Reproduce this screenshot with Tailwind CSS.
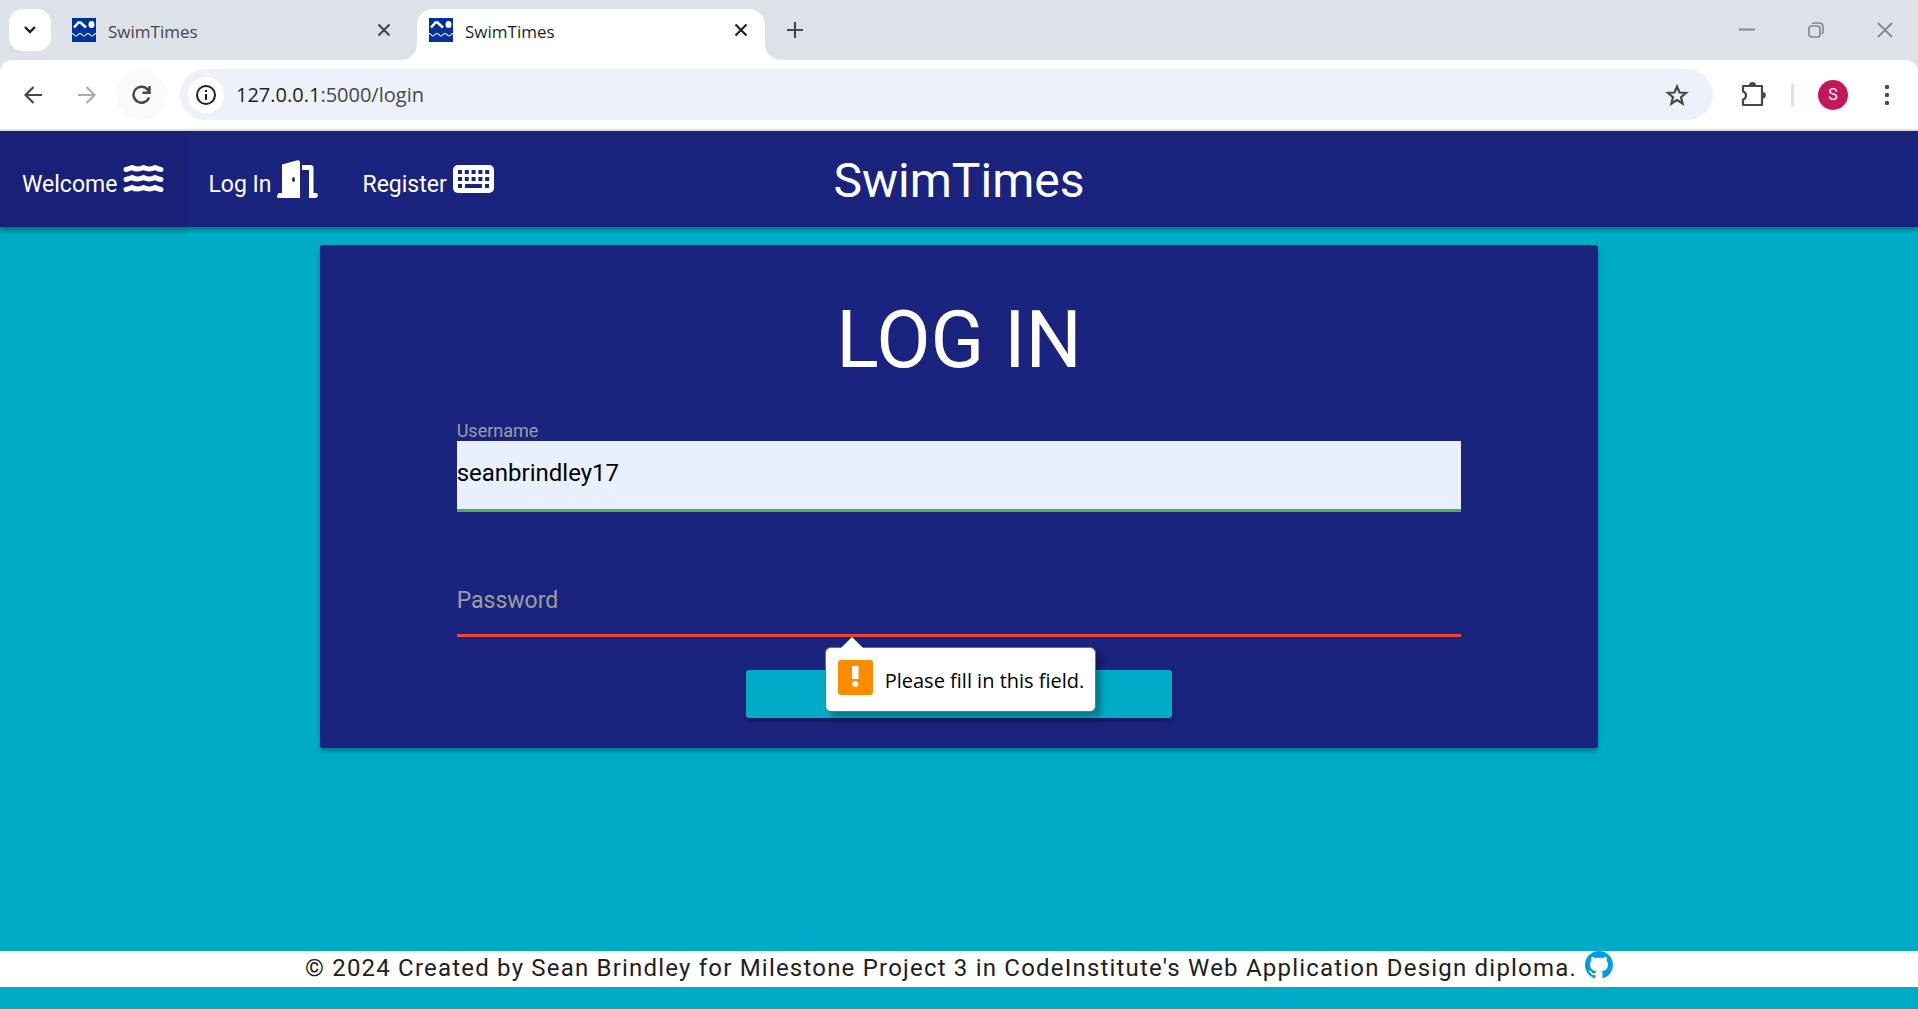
<!DOCTYPE html>
<html lang="en">
<head>
<meta charset="utf-8">
<title>SwimTimes</title>
<script src="https://cdn.jsdelivr.net/npm/@tailwindcss/browser@4"></script>
</head>
<body class="flex min-h-screen flex-col bg-[#00acc5] font-['Roboto',sans-serif] text-white">

<svg class="hidden">
  <symbol id="favicon" viewBox="0 0 24 24">
    <path fill="#039" d="M0 0h24v24H0z"/>
    <path fill="none" stroke="#fff" stroke-width="2.600" d="M2 9.500 6.500 4.500h2L14 9.500"/>
    <ellipse cx="19.500" cy="6.500" rx="3" ry="3.500" fill="#fff"/>
    <path fill="none" stroke="#fff" stroke-width="1.200" d="M0 15.500c2 0 2 2.500 4 2.500s2-2.500 4-2.500 2 2.500 4 2.500 2-2.500 4-2.500 2 2.500 4 2.500 2-2.500 4-2.500"/>
  </symbol>
  <symbol id="cross" viewBox="0 0 14 14">
    <path fill="none" stroke="currentColor" stroke-width="2.200" d="m1.500 1.500 11 11m0-11-11 11"/>
  </symbol>
</svg>

<!-- Browser window -->
<div class="bg-[#dde1e8] font-['Open_Sans',sans-serif] text-[#474747]">
  <div class="flex h-[60px] items-end pl-[9px]">
    <button aria-label="Search tabs" class="mb-[9px] flex size-[42px] items-center justify-center rounded-[14px] bg-white text-[#1f1f1f]">
      <svg class="h-2 w-3" viewBox="0 0 12 8" fill="none" stroke="currentColor" stroke-width="2.400"><path d="m1 1 5 5 5-5"/></svg>
    </button>
    <div class="ml-[21px] flex h-[51px] w-[345px] items-start pt-[9px]">
      <svg class="size-6"><use href="#favicon"/></svg>
      <span class="ml-3 flex-1 text-[17px] leading-7">SwimTimes</span>
      <button aria-label="Close tab" class="mt-[5px] mr-[26px] size-[14px]"><svg class="size-full"><use href="#cross"/></svg></button>
    </div>
    <div class="relative flex h-[51px] w-[348px] items-start rounded-t-2xl bg-white px-3 pt-[9px] text-[#1f1f1f]">
      <svg class="absolute bottom-0 -left-4 size-4" viewBox="0 0 16 16" fill="#fff"><path d="M16 0v16H0A16 16 0 0 0 16 0"/></svg>
      <svg class="absolute -right-4 bottom-0 size-4" viewBox="0 0 16 16" fill="#fff"><path d="M0 0v16h16A16 16 0 0 1 0 0"/></svg>
      <svg class="size-6"><use href="#favicon"/></svg>
      <span class="ml-3 flex-1 text-[17px] leading-7">SwimTimes</span>
      <button aria-label="Close tab" class="mt-[5px] mr-[5px] size-[14px]"><svg class="size-full"><use href="#cross"/></svg></button>
    </div>
    <button aria-label="New tab" class="mb-[22px] ml-[22px] size-4">
      <svg viewBox="0 0 16 16" stroke="currentColor" stroke-width="2.200"><path d="M8 0v16M0 8h16"/></svg>
    </button>
    <div class="mr-[25px] mb-[22px] ml-auto flex gap-[53px] text-[#85878b]">
      <button aria-label="Minimize" class="size-4"><svg viewBox="0 0 16 16" stroke="currentColor" stroke-width="2"><path d="M0 7.500h16"/></svg></button>
      <button aria-label="Restore" class="size-4"><svg viewBox="0 0 16 16" fill="none" stroke="currentColor" stroke-width="1.700"><rect x="1" y="4" width="11" height="11" rx="2.500"/><path d="M4 1.500C5 1 6 1 7 1h4q4 0 4 4v4q0 2-1 3"/></svg></button>
      <button aria-label="Close" class="size-4"><svg viewBox="0 0 16 16" stroke="currentColor" stroke-width="1.800"><path d="m1 1 14 14M15 1 1 15"/></svg></button>
    </div>
  </div>

  <div class="flex h-[71px] items-center rounded-t-xl border-b-2 border-[#e0e2e2] bg-white">
    <button aria-label="Back" class="ml-6 size-[18px]"><svg viewBox="0 0 18 18" fill="none" stroke="currentColor" stroke-width="2.200"><path d="M18 9H2M9.500 1 1.500 9l8 8"/></svg></button>
    <button aria-label="Forward" class="ml-9 size-[18px] text-[#ababab]"><svg viewBox="0 0 18 18" fill="none" stroke="currentColor" stroke-width="2.200"><path d="M0 9h16M8.500 1l8 8-8 8"/></svg></button>
    <button aria-label="Reload" class="ml-5 flex size-[51px] items-center justify-center rounded-full bg-[#fafafa]">
      <svg class="size-5" viewBox="0 0 20 20" fill="none" stroke="currentColor" stroke-width="2.400"><path d="M17 12.500a8 8 0 1 1-1-7.500l1 1.500M17.500 1v6.800h-7"/></svg>
    </button>
    <div class="ml-[13px] flex h-[51px] flex-1 items-center rounded-full bg-[#ecf1fa] pr-6 pl-2">
      <button aria-label="Site information" class="flex size-9 items-center justify-center rounded-full bg-white text-[#1f1f1f]">
        <svg class="size-5" viewBox="0 0 20 20" fill="none" stroke="currentColor" stroke-width="2"><circle cx="10" cy="10" r="9"/><path d="M10 9v6M10 5v2"/></svg>
      </button>
      <div class="ml-3 flex-1 text-[20px]"><span class="text-[#1f1f1f]">127.0.0.1</span>:5000/login</div>
      <button aria-label="Bookmark" class="size-6"><svg viewBox="0 0 24 24" fill="none" stroke="currentColor" stroke-width="2.200"><path d="m12 3.500 2.500 6 6.500.5-5 4.200 1.600 6.300L12 17l-5.600 3.500L8 14.200 3 10l6.500-.5z"/></svg></button>
    </div>
    <button aria-label="Extensions" class="ml-7 size-[26px]">
      <svg viewBox="0 0 26 26"><path fill="none" stroke="currentColor" stroke-width="2.200" stroke-linejoin="round" d="M2 4h19v19H2v-5.500c4-1 4-7 0-8z"/><path fill="currentColor" d="M8 3.500a3.500 3.500 0 0 1 7 0zM21.500 10a3.300 3.300 0 0 1 0 6.600z"/></svg>
    </button>
    <div class="ml-6 h-6 w-[3px] rounded bg-[#d3e3fd]"></div>
    <button aria-label="Profile" class="ml-6 size-[30px] rounded-full bg-[#c2185b] font-['Roboto',sans-serif] text-base text-white">S</button>
    <button aria-label="Menu" class="mr-[21px] ml-[29px] size-5"><svg viewBox="0 0 20 20" fill="currentColor"><circle cx="10" cy="2" r="2.200"/><circle cx="10" cy="10" r="2.200"/><circle cx="10" cy="18" r="2.200"/></svg></button>
  </div>
</div>

<!-- Site navigation -->
<nav class="relative grid h-24 grid-cols-[1fr_auto_1fr] bg-[#1a237e] shadow-[0_3px_4px_rgba(0,0,0,0.3)]">
  <ul class="flex text-[23px]">
    <li><a href="#" class="flex h-[103px] items-start bg-black/5 px-[22px] pt-[34px]"><span class="mt-1 leading-8">Welcome</span>
      <svg class="ml-[6px] h-7 w-[41px]" viewBox="0 0 41 28" fill="none" stroke="#fff" stroke-width="5" stroke-linecap="round"><path d="M3 4.500q4-1 6-2 5 3 11.500 0 6 3 11.500 0 3 1.500 6 2M3 14.500q4-1 6-2 5 3 11.500 0 6 3 11.500 0 3 1.500 6 2M3 24.500q4-1 6-2 5 3 11.500 0 6 3 11.500 0 3 1.500 6 2"/></svg></a></li>
    <li><a href="#" class="flex items-start px-[22px] pt-[29px]"><span class="mt-[9px] leading-8">Log In</span>
      <svg class="ml-[6px] h-[38px] w-[41px]" viewBox="0 0 41 38" fill="#fff"><path fill-rule="evenodd" d="M5 4.500 20.500.2Q23 0 23 2v36H1.500Q0 38 0 36.500T1.500 33H5zM16.500 17q-1.500 0-1.500 2.500t1.500 2.500 1.500-2.500-1.500-2.500M25 5h8.500q3 0 3 3v25H39q2 0 2 2t-2 3h-7V10h-7z"/></svg></a></li>
    <li><a href="#" class="flex items-start px-[22px] pt-[34px]"><span class="mt-1 leading-8">Register</span>
      <svg class="ml-[6px] h-7 w-[41px]" viewBox="0 0 41 28"><rect width="41" height="28" rx="5" fill="#fff"/><path stroke="#1a237e" stroke-width="4" stroke-dasharray="4 2.800" d="M5 7h32M5 14h32"/><path stroke="#1a237e" stroke-width="4" d="M5 21h4m3 0h17m3 0h4"/></svg></a></li>
  </ul>
  <a href="#" class="pt-[2px] text-5xl leading-[96px]">SwimTimes</a>
</nav>

<main class="flex-1 pt-[18px]">
  <section class="mx-auto w-2/3 rounded-[3px] bg-[#1a237e] pt-[54px] pb-[30px] shadow-[0_3px_4px_rgba(0,0,0,0.3)]">
    <h1 class="text-center text-[79px] leading-[82px]">LOG IN</h1>
    <form novalidate class="flex flex-col">
      <div class="mx-[137px] mt-10 flex flex-col">
        <label for="username" class="text-lg leading-5 text-[#9e9e9e]">Username</label>
        <input id="username" type="text" value="seanbrindley17" class="h-[71px] border-b-3 border-[#4caf50] bg-[#e8f0fe] pb-1 text-2xl text-black outline-none">
      </div>
      <div class="relative mx-[137px] mt-[53px] h-[72px]">
        <label for="password" class="absolute top-5 left-0 text-[23px] leading-8 text-[#9e9e9e]">Password</label>
        <input id="password" type="password" class="h-full w-full border-b-3 border-[#f44336] bg-transparent outline-none">
        <!-- Validation message over the submit button -->
        <div role="alert" class="absolute top-[82px] left-[368px] flex h-[65px] w-[271px] items-center rounded-md border border-gray-500 bg-white px-3 text-[20px] whitespace-nowrap text-black shadow-[5px_5px_6px_rgba(0,0,0,0.3)] font-['Open_Sans',sans-serif]">
          <svg class="absolute -top-3 left-[14px] h-3 w-6" viewBox="0 0 24 12"><path fill="#fff" d="M0 13 12 1l12 12z"/></svg>
          <svg class="mb-1 size-[35px] shrink-0" viewBox="0 0 35 35"><rect width="35" height="35" rx="3" fill="#ff8c00"/><path fill="#fff" d="M14 6h6.500v13H14z"/><circle cx="17.300" cy="24" r="3" fill="#fff"/></svg>
          <span class="mt-[2px] ml-3">Please fill in this field.</span>
        </div>
      </div>
      <button type="submit" aria-label="Log In" class="mx-auto mt-[33px] h-12 w-1/3 rounded-[3px] bg-[#00acc5] shadow-[0_3px_4px_rgba(0,0,0,0.3)]"></button>
    </form>
  </section>
</main>

<footer class="mb-[22px] flex h-9 items-start justify-center bg-white text-2xl tracking-wider text-[#212121]">
  <p class="leading-[34px]">© 2024 Created by Sean Brindley for Milestone Project 3 in CodeInstitute's Web Application Design diploma.</p>
  <a href="#" aria-label="GitHub" class="ml-2"><svg class="size-7" viewBox="0 0 16 16" fill="#039be5"><path d="M8 0C3.580 0 0 3.580 0 8c0 3.540 2.290 6.530 5.470 7.590.4.070.55-.17.55-.38 0-.19-.01-.82-.01-1.490-2.010.37-2.530-.49-2.690-.94-.09-.23-.48-.94-.82-1.130-.28-.15-.68-.52-.01-.53.63-.01 1.080.58 1.230.82.72 1.210 1.870.87 2.330.66.070-.52.28-.87.51-1.070-1.780-.2-3.640-.89-3.640-3.950 0-.87.31-1.590.82-2.150-.08-.2-.36-1.020.08-2.120 0 0 .67-.21 2.200.82.64-.18 1.320-.27 2-.27s1.360.09 2 .27c1.530-1.040 2.200-.82 2.200-.82.44 1.100.16 1.920.08 2.120.51.56.82 1.270.82 2.150 0 3.070-1.870 3.750-3.650 3.950.29.25.54.73.54 1.480 0 1.070-.01 1.930-.01 2.200 0 .21.15.46.55.38A8.010 8.010 0 0 0 16 8c0-4.420-3.580-8-8-8z"/></svg></a>
</footer>
</body>
</html>
